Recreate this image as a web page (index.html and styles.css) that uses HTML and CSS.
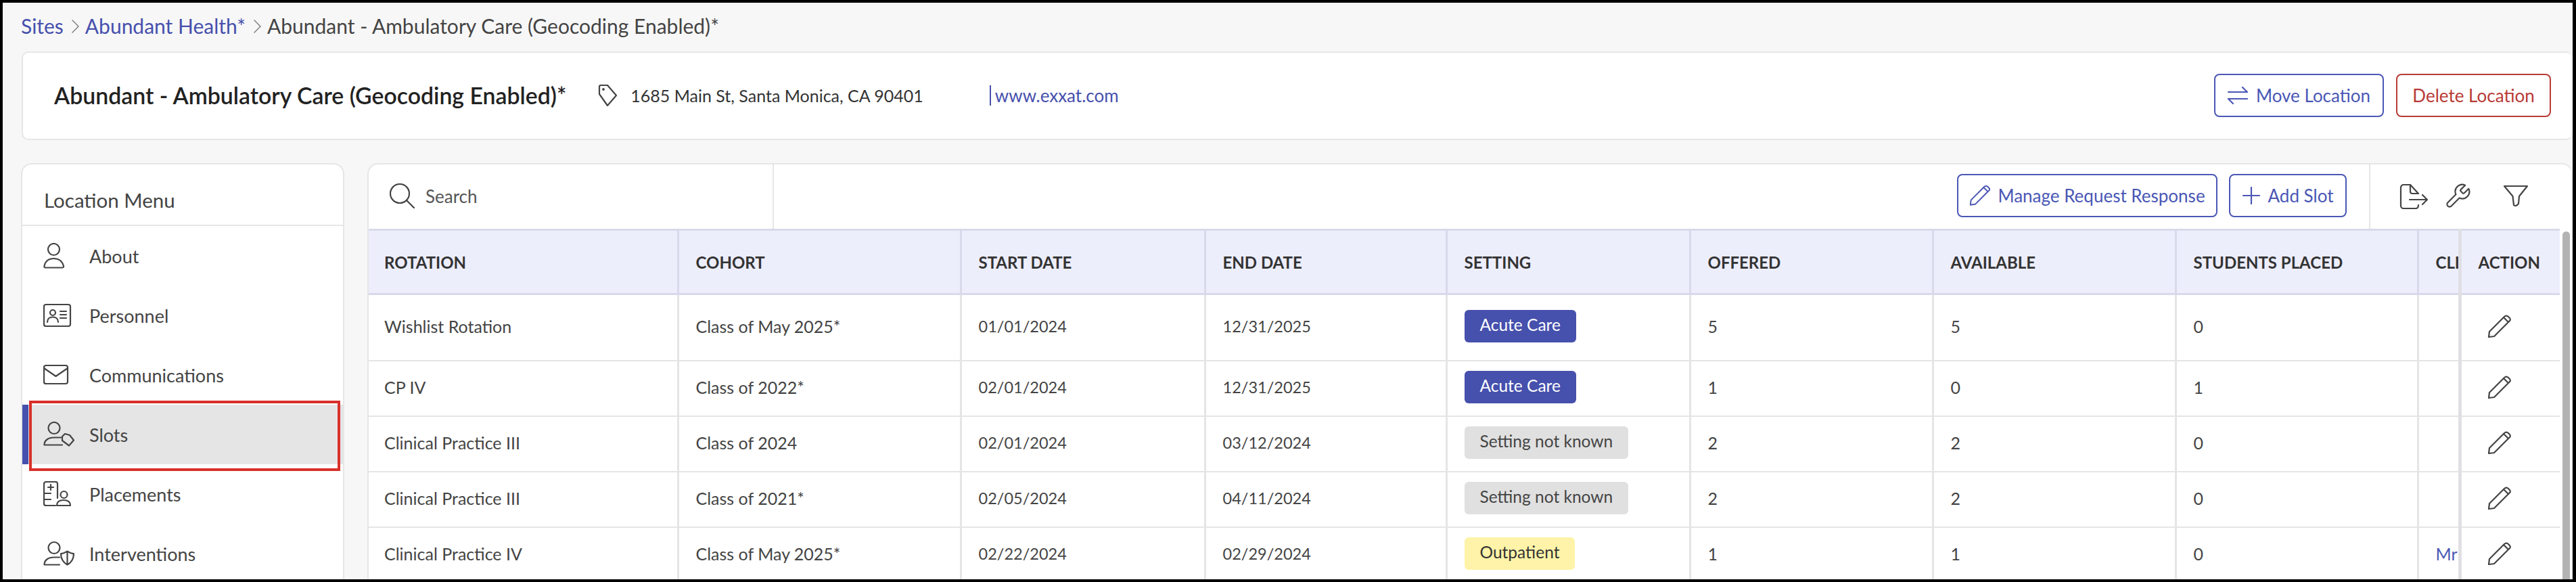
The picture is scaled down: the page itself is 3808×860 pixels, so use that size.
FILE: index.html
```html
<!DOCTYPE html>
<html lang="en">

<head>
    <meta charset="UTF-8">
    <meta name="viewport" content="width=device-width, initial-scale=1.0">
    <title>Abundant - Ambulatory Care</title>
    <link rel="stylesheet" href="styles.css">
</head>

<body>
    <div class="breadcrumb">
        <a class="crumb-link">Sites</a>
        <svg class="icon crumb-sep" width="11" height="20" viewBox="0 0 11 20"><path d="M1 1L10 10L1 19" /></svg>
        <a class="crumb-link">Abundant Health*</a>
        <svg class="icon crumb-sep" width="11" height="20" viewBox="0 0 11 20"><path d="M1 1L10 10L1 19" /></svg>
        <span>Abundant - Ambulatory Care (Geocoding Enabled)*</span>
    </div>

    <div class="site-card">
        <h1 class="site-title">Abundant - Ambulatory Care (Geocoding Enabled)*</h1>
        <svg class="icon tag-icon" width="28" height="32" viewBox="0 0 28 32">
            <path d="M2 3Q2 1 4 1H14L27 16L14 31L2 14Z" />
            <circle cx="8" cy="7" r="0.8" />
        </svg>
        <span class="site-address">1685 Main St, Santa Monica, CA 90401</span>
        <a class="site-link">www.exxat.com</a>
        <div class="site-actions">
            <button class="btn btn-move">
                <svg class="icon icon-blue" width="30" height="28" viewBox="0 0 30 28">
                    <path d="M1 9H29M22 2L29 9M29 19H1M8 26L1 19" />
                </svg>
                Move Location
            </button>
            <button class="btn btn-delete">Delete Location</button>
        </div>
    </div>

    <div class="content">
        <div class="side-menu">
            <div class="side-title">Location Menu</div>

            <div class="menu-item">
                <svg class="icon" width="46" height="38" viewBox="0 0 46 38">
                    <circle cx="15.5" cy="9.5" r="8.5" />
                    <path d="M3 36.5Q1 36.5 1.500 34C3 27 8 23 15.500 23S28 27 30 34Q30.500 36.500 28 36.500Z" />
                </svg>
                About
            </div>
            <div class="menu-item">
                <svg class="icon" width="46" height="38" viewBox="0 0 46 38">
                    <rect x="1" y="3" width="39" height="32" rx="3" />
                    <circle cx="14" cy="15" r="4" />
                    <path d="M6 29C6 24 9.500 21.500 14 21.500S22 24 22 29M25 13H34M25 18H34M25 23H34" />
                </svg>
                Personnel
            </div>
            <div class="menu-item">
                <svg class="icon" width="46" height="38" viewBox="0 0 46 38">
                    <rect x="1" y="5" width="35" height="27" rx="3" />
                    <path d="M1 9L18.500 21L36 9" />
                </svg>
                Communications
            </div>
            <div class="menu-item menu-active">
                <svg class="icon" width="46" height="38" viewBox="0 0 46 38">
                    <circle cx="16" cy="9.500" r="8.500" />
                    <path d="M1.500 34C1.500 28 7 23.500 16 23.500H26M1.500 34.500H28" />
                    <path d="M28 22L32 18L39 20L45 27.500L38 35.500L28 28Z" />
                </svg>
                Slots
                <span class="menu-highlight"></span>
            </div>
            <div class="menu-item">
                <svg class="icon" width="46" height="38" viewBox="0 0 46 38">
                    <path d="M21 25V4A3 3 0 0 0 18 1H4A3 3 0 0 0 1 4V33A3 3 0 0 0 4 36H18" />
                    <path d="M11 5V13M7 9H15M1 18H11M1 27H11" />
                    <circle cx="30.500" cy="20" r="5" />
                    <path d="M20 36C20 30 24 28 30 28S40 30 40 36Z" />
                </svg>
                Placements
            </div>
            <div class="menu-item">
                <svg class="icon" width="46" height="38" viewBox="0 0 46 38">
                    <circle cx="16" cy="10.500" r="8.500" />
                    <path d="M1.500 35C1.500 29 7 24.500 16 24.500H24M1.500 35.500H24" />
                    <path d="M26 19C30 19 33 17 35.500 15.500C38 17 41 19 45 19C45 27 42 32 35.500 35.500C29 32 26 27 26 19ZM35.500 15.500V35.500" />
                </svg>
                Interventions
            </div>
        </div>

        <div class="slots-panel">
            <div class="toolbar">
                <div class="search-box">
                    <svg class="icon" width="37" height="37" viewBox="0 0 37 37">
                        <circle cx="15" cy="15" r="14" />
                        <path d="M25 25L36 36" />
                    </svg>
                    <span>Search</span>
                </div>
                <div class="toolbar-actions">
                    <button class="btn btn-manage">
                        <svg class="icon icon-blue" width="32" height="33" viewBox="0 0 36 36">
                            <path d="M2 34L3 26L25 4Q28 1 31 4L33 6Q35 9 32 11L10 33ZM24 5L31 12" />
                        </svg>
                        Manage Request Response
                    </button>
                    <button class="btn btn-add">
                        <svg class="icon icon-blue" width="26" height="26" viewBox="0 0 26 26">
                            <path d="M13 1V25M1 13H25" />
                        </svg>
                        Add Slot
                    </button>
                </div>
                <div class="toolbar-icons">
                    <svg class="icon" width="42" height="38" viewBox="0 0 42 38">
                        <path d="M28 15L16 2H6A4 4 0 0 0 2 6V33A4 4 0 0 0 6 37H24Q28 37 28 32" />
                        <path d="M16 2V12A3 3 0 0 0 19 15H28M15 24H41M34 17L41 24L34 31" />
                    </svg>
                    <svg class="icon wrench-icon" width="38" height="38" viewBox="1 1 22 22">
                        <path d="M14.7 6.300a1 1 0 0 0 0 1.400l1.600 1.600a1 1 0 0 0 1.400 0l3.770-3.770a6 6 0 0 1-7.940 7.940l-6.910 6.910a2.120 2.120 0 0 1-3-3l6.910-6.910a6 6 0 0 1 7.940-7.940l-3.760 3.760z" />
                    </svg>
                    <svg class="icon filter-icon" width="38" height="34" viewBox="0 0 38 34">
                        <path d="M2 2H36L24 17L23 28Q19 33 16 30L14.500 17Z" />
                    </svg>
                </div>
            </div>

            <div class="table-area">
                <table class="slots-table">
                    <colgroup>
                        <col class="col-rotation">
                        <col class="col-cohort">
                        <col class="col-date">
                        <col class="col-date2">
                        <col class="col-setting">
                        <col class="col-num">
                        <col class="col-num">
                        <col class="col-placed">
                        <col class="col-clinical">
                        <col class="col-action">
                    </colgroup>
                    <thead>
                        <tr>
                            <th>ROTATION</th>
                            <th>COHORT</th>
                            <th>START DATE</th>
                            <th>END DATE</th>
                            <th>SETTING</th>
                            <th>OFFERED</th>
                            <th>AVAILABLE</th>
                            <th>STUDENTS PLACED</th>
                            <th>CLI</th>
                            <th class="action-cell">ACTION</th>
                        </tr>
                    </thead>
                    <tbody>
                        <tr class="row-first">
                            <td>Wishlist Rotation</td>
                            <td>Class of May 2025*</td>
                            <td class="date-cell">01/01/2024</td>
                            <td class="date-cell">12/31/2025</td>
                            <td><span class="badge badge-acute">Acute Care</span></td>
                            <td>5</td>
                            <td>5</td>
                            <td>0</td>
                            <td></td>
                            <td class="action-cell">
                                <svg class="icon pencil-icon" width="36" height="36" viewBox="0 0 36 36"><path d="M2 34L3 26L25 4Q28 1 31 4L33 6Q35 9 32 11L10 33ZM24 5L31 12" /></svg>
                            </td>
                        </tr>
                        <tr>
                            <td>CP IV</td>
                            <td>Class of 2022*</td>
                            <td class="date-cell">02/01/2024</td>
                            <td class="date-cell">12/31/2025</td>
                            <td><span class="badge badge-acute">Acute Care</span></td>
                            <td>1</td>
                            <td>0</td>
                            <td>1</td>
                            <td></td>
                            <td class="action-cell">
                                <svg class="icon pencil-icon" width="36" height="36" viewBox="0 0 36 36"><path d="M2 34L3 26L25 4Q28 1 31 4L33 6Q35 9 32 11L10 33ZM24 5L31 12" /></svg>
                            </td>
                        </tr>
                        <tr>
                            <td>Clinical Practice III</td>
                            <td>Class of 2024</td>
                            <td class="date-cell">02/01/2024</td>
                            <td class="date-cell">03/12/2024</td>
                            <td><span class="badge badge-unknown">Setting not known</span></td>
                            <td>2</td>
                            <td>2</td>
                            <td>0</td>
                            <td></td>
                            <td class="action-cell">
                                <svg class="icon pencil-icon" width="36" height="36" viewBox="0 0 36 36"><path d="M2 34L3 26L25 4Q28 1 31 4L33 6Q35 9 32 11L10 33ZM24 5L31 12" /></svg>
                            </td>
                        </tr>
                        <tr>
                            <td>Clinical Practice III</td>
                            <td>Class of 2021*</td>
                            <td class="date-cell">02/05/2024</td>
                            <td class="date-cell">04/11/2024</td>
                            <td><span class="badge badge-unknown">Setting not known</span></td>
                            <td>2</td>
                            <td>2</td>
                            <td>0</td>
                            <td></td>
                            <td class="action-cell">
                                <svg class="icon pencil-icon" width="36" height="36" viewBox="0 0 36 36"><path d="M2 34L3 26L25 4Q28 1 31 4L33 6Q35 9 32 11L10 33ZM24 5L31 12" /></svg>
                            </td>
                        </tr>
                        <tr>
                            <td>Clinical Practice IV</td>
                            <td>Class of May 2025*</td>
                            <td class="date-cell">02/22/2024</td>
                            <td class="date-cell">02/29/2024</td>
                            <td><span class="badge badge-outpatient">Outpatient</span></td>
                            <td>1</td>
                            <td>1</td>
                            <td>0</td>
                            <td class="clinical-link">Mr</td>
                            <td class="action-cell">
                                <svg class="icon pencil-icon" width="36" height="36" viewBox="0 0 36 36"><path d="M2 34L3 26L25 4Q28 1 31 4L33 6Q35 9 32 11L10 33ZM24 5L31 12" /></svg>
                            </td>
                        </tr>
                    </tbody>
                </table>
                <div class="scrollbar"></div>
            </div>
        </div>
    </div>
</body>

</html>
```

FILE: styles.css
```css
* {
    box-sizing: border-box;
}

body {
    font-family: Lato, "Noto Sans", sans-serif;
    margin: 0;
    height: 860px;
    overflow: hidden;
    background-color: #f7f7f7;
    border: solid #000;
    border-width: 4px 5px 4px 4px;
    color: #444;
}

.icon {
    fill: none;
    stroke: #444;
    stroke-width: 2.2;
    stroke-linejoin: round;
    stroke-linecap: round;
    flex-shrink: 0;
}

.icon-blue {
    stroke: #4a57b5;
}

/* breadcrumb */
.breadcrumb {
    display: flex;
    align-items: center;
    height: 72px;
    padding: 0 0 4px 27px;
    font-size: 30px;
}

.crumb-link {
    color: #4650ad;
}

.crumb-sep {
    margin: 2px 9px 0 12px;
    stroke: #777;
    stroke-width: 1.4;
}

/* site header card */
.site-card {
    display: flex;
    align-items: center;
    height: 131px;
    margin-left: 28px;
    padding: 0 32px 2px 46px;
    background-color: #fff;
    border: 2px solid #e6e6e6;
    border-right: none;
    border-radius: 10px;
}

.site-title {
    margin: 0;
    font-size: 33.8px;
    font-weight: 600;
    color: #222;
}

.tag-icon {
    margin-left: 47px;
}

.site-address {
    margin-left: 20px;
    font-size: 25px;
    color: #333;
}

.site-link {
    margin-left: 98px;
    padding-left: 6px;
    border-left: 2px solid #4650ad;
    font-size: 26px;
    line-height: 30px;
    color: #4650ad;
}

.site-actions {
    display: flex;
    gap: 18px;
    margin-left: auto;
}

.btn {
    display: flex;
    align-items: center;
    justify-content: center;
    height: 64px;
    padding: 0;
    background-color: #fff;
    border: 2px solid #4a57b5;
    border-radius: 8px;
    font-family: inherit;
    font-size: 26px;
    color: #4a57b5;
}

.btn-move {
    width: 251px;
    gap: 12px;
}

.btn-delete {
    width: 229px;
    border-color: #b93a36;
    color: #b93a36;
}

.btn-manage {
    width: 385px;
    gap: 10px;
}

.btn-add {
    width: 174px;
    gap: 12px;
}

/* main area */
.content {
    display: flex;
    gap: 34px;
    margin: 34px 0 0 27px;
    height: 640px;
}

.side-menu {
    width: 478px;
    flex-shrink: 0;
    background-color: #fff;
    border: 2px solid #e6e6e6;
    border-radius: 16px 16px 0 0;
}

.side-title {
    height: 91px;
    padding: 37px 0 0 32px;
    border-bottom: 2px solid #e6e6e6;
    font-size: 29.5px;
    line-height: 32px;
    color: #444;
}

.menu-item {
    position: relative;
    display: flex;
    align-items: center;
    gap: 22px;
    height: 88px;
    padding-left: 31px;
    font-size: 27px;
    color: #444;
}

.menu-active {
    padding-left: 22px;
    background-color: #e5e5e5;
    border-left: 9px solid #4650ad;
}

.menu-highlight {
    position: absolute;
    top: -6px;
    bottom: -10px;
    left: 1px;
    width: 460px;
    border: 4px solid #d9302a;
}

.slots-panel {
    flex: 1;
    min-width: 0;
    background-color: #fff;
    border: 2px solid #e6e6e6;
    border-right: 1px solid #e6e6e6;
    border-radius: 16px 16px 0 0;
}

.toolbar {
    display: flex;
    align-items: stretch;
    height: 95px;
}

.search-box {
    display: flex;
    align-items: center;
    gap: 16px;
    width: 599px;
    padding: 0 0 2px 31px;
    border-right: 2px solid #e6e6e6;
    font-size: 26px;
    color: #555;
}

.toolbar-actions {
    display: flex;
    align-items: center;
    justify-content: flex-end;
    gap: 17px;
    width: 2360px;
    padding: 0 33px 4px 0;
    border-right: 2px solid #e6e6e6;
}

.toolbar-icons {
    display: flex;
    align-items: center;
    padding: 0 0 2px 43px;
}

.wrench-icon {
    margin-left: 25px;
    stroke-width: 1.25;
}

.filter-icon {
    margin-left: 48px;
}

/* table */
.table-area {
    display: flex;
    align-items: flex-start;
    gap: 4px;
}

.slots-table {
    table-layout: fixed;
    width: 3239px;
    flex-shrink: 0;
    border-collapse: collapse;
    font-size: 25px;
}

.col-rotation {
    width: 457px;
}

.col-cohort {
    width: 418px;
}

.col-date {
    width: 361px;
}

.col-date2 {
    width: 357px;
}

.col-setting {
    width: 360px;
}

.col-num {
    width: 359px;
}

.col-placed {
    width: 358px;
}

.col-clinical {
    width: 62px;
}

.col-action {
    width: 148px;
}

.slots-table th {
    height: 95px;
    padding: 0 0 0 25px;
    overflow: hidden;
    white-space: nowrap;
    background-color: #edeefc;
    border: 3px solid #d8d9ea;
    border-width: 3px 3px 3px 0;
    font-size: 24px;
    font-weight: 700;
    text-align: left;
    color: #333;
}

.slots-table td {
    height: 82px;
    padding: 0 0 3px 25px;
    overflow: hidden;
    white-space: nowrap;
    border: solid #e5e5e8;
    border-width: 0 3px 2px 0;
}

.slots-table th:first-child,
.slots-table td:first-child {
    padding-left: 23px;
}

.slots-table .row-first td {
    height: 98px;
}

.slots-table .date-cell {
    font-size: 23.5px;
}

.slots-table .action-cell {
    border-left: 5px solid #e0e0e4;
    border-right: none;
}

.slots-table td.action-cell {
    padding-left: 38px;
}

.pencil-icon {
    display: block;
}

.clinical-link {
    color: #4a57b5;
}

.badge {
    display: inline-block;
    height: 48px;
    padding: 0 23px;
    border-radius: 6px;
    font-size: 24.5px;
    line-height: 44px;
}

.badge-acute {
    background-color: #4650ad;
    color: #fff;
}

.badge-unknown {
    background-color: #e0e0e0;
    color: #444;
}

.badge-outpatient {
    background-color: #fef3a8;
    color: #333;
}

.scrollbar {
    width: 11px;
    height: 520px;
    margin-top: 4px;
    background-color: #b3b3b3;
    border-radius: 6px 6px 0 0;
}
```
